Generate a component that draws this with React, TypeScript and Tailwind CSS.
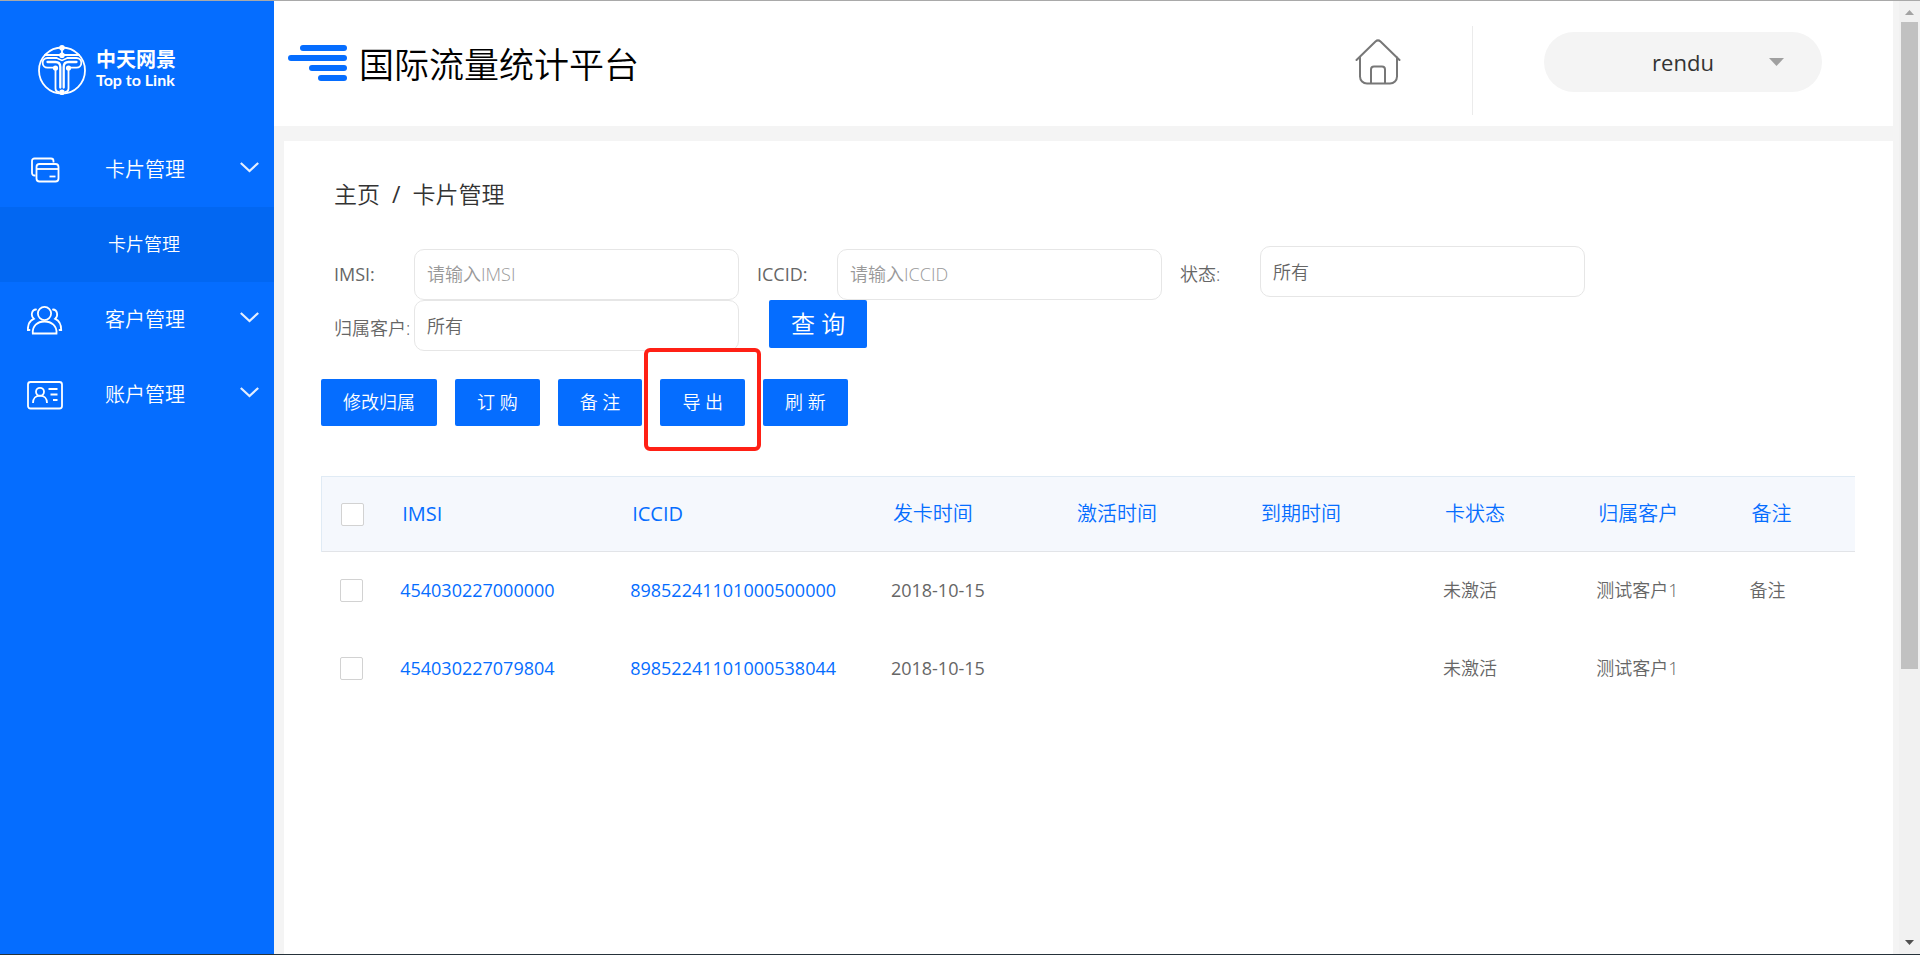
import { Fragment } from 'react';

const menus = [
  { label: '卡片管理', icon: CardIcon, children: ['卡片管理'] },
  { label: '客户管理', icon: UsersIcon, children: [] },
  { label: '账户管理', icon: IdIcon, children: [] },
];

const columns = [
  { title: 'IMSI', className: 'w-[15%] font-normal' },
  { title: 'ICCID', className: 'w-[17%] font-normal' },
  { title: '发卡时间', className: 'w-[12%] font-[350]' },
  { title: '激活时间', className: 'w-[12%] font-[350]' },
  { title: '到期时间', className: 'w-[12%] font-[350]' },
  { title: '卡状态', className: 'w-[10%] font-[350]' },
  { title: '归属客户', className: 'w-[10%] font-[350]' },
  { title: '备注', className: 'w-[7%] font-[350]' },
];

const rows = [
  {
    imsi: '454030227000000',
    iccid: '89852241101000500000',
    issued: '2018-10-15',
    activated: '',
    expires: '',
    status: '未激活',
    customer: '测试客户1',
    remark: '备注',
  },
  {
    imsi: '454030227079804',
    iccid: '89852241101000538044',
    issued: '2018-10-15',
    activated: '',
    expires: '',
    status: '未激活',
    customer: '测试客户1',
    remark: '',
  },
];

const fieldClass =
  'h-[51px] w-[325px] appearance-none rounded-[10px] border border-[#e6e6e6] bg-white px-3 text-lg font-[350] text-[#666] placeholder:text-[#999] outline-none';
const buttonClass = 'h-[47px] rounded-[2px] bg-[#056dff] px-[22px] pb-[2px] text-lg text-white';
const checkboxClass =
  'block h-[23px] w-[23px] appearance-none rounded-[2px] border border-[#d2d2d2] bg-white checked:bg-[#056dff]';

function Logo() {
  return (
    <svg width="48" height="50" viewBox="0 0 48 50" fill="none" stroke="#fff" strokeWidth="1.8" strokeLinecap="round" aria-hidden="true">
      <circle cx="24" cy="25.500" r="23" />
      <path d="M7 10H41" />
      <path d="M18.500 13H9.500a4.800 4.800 0 0 0 0 9.700H17.500V43.500q0 3 3 3.500" />
      <path d="M29.500 13H38.500a4.800 4.800 0 0 1 0 9.700H30.500V43.500q0 3-3 3.500" />
      <path d="M18.500 13l5.500 2.500 5.500-2.500" strokeWidth="1.400" />
      <path d="M9.500 17H17.500q4.800 0 4.800 5V42.500M38.500 17H30.500q-4.800 0-4.800 5V42.500" strokeWidth="2.300" />
      <path d="M24 3v8" />
      <g fill="#fff" stroke="none">
        <circle cx="24" cy="2.800" r="2.800" />
        <circle cx="24" cy="10.300" r="2.800" />
        <circle cx="17.500" cy="23" r="2.600" />
        <circle cx="30.500" cy="23" r="2.600" />
        <circle cx="24" cy="47.200" r="2.800" />
      </g>
    </svg>
  );
}

function CardIcon() {
  return (
    <svg width="36" height="36" viewBox="0 0 36 36" fill="none" stroke="#fff" strokeWidth="1.8" aria-hidden="true">
      <path d="M8.500 23.500H7.500a2.500 2.500 0 0 1-2.500-2.500V9A2.500 2.500 0 0 1 7.500 6.500h16.500a2.500 2.500 0 0 1 2.500 2.500v1.500" />
      <rect x="9.500" y="12" width="22" height="17.500" rx="3" />
      <path d="M10 17h21.500" />
      <path d="M22.500 24.500h6" />
    </svg>
  );
}

function UsersIcon() {
  return (
    <svg width="36" height="36" viewBox="0 0 36 36" fill="none" stroke="#fff" strokeWidth="1.8" strokeLinecap="round" aria-hidden="true">
      <circle cx="17.500" cy="11.500" r="6.600" />
      <path d="M5.800 31.500c-.6-7.500 4.500-12 11.700-12s12.600 4.500 12 12z" />
      <path d="M9 7.500c-4.500.2-5.500 6.500-2.200 9.300-4 1.700-6 6-6 11.200h1.700" />
      <path d="M26 7.500c4.500.2 5.500 6.500 2.200 9.300 4 1.700 6 6 6 11.200h-1.700" />
    </svg>
  );
}

function IdIcon() {
  return (
    <svg width="36" height="36" viewBox="0 0 36 36" fill="none" stroke="#fff" strokeWidth="1.8" aria-hidden="true">
      <rect x="1" y="5" width="34" height="26.500" rx="2.500" />
      <circle cx="13" cy="14.800" r="4" />
      <path d="M6 26c0-4.500 2.800-7.300 7-7.300s7 2.800 7 7.300" />
      <path d="M21.500 12h9M23.500 17.500h7M26 23h4.500" />
    </svg>
  );
}

function Chevron() {
  return (
    <svg width="19" height="11" viewBox="0 0 19 11" fill="none" stroke="#e4eeff" strokeWidth="2.200" aria-hidden="true">
      <path d="M.8 1l8.700 8 8.700-8" />
    </svg>
  );
}

function Sidebar() {
  return (
    <aside className="w-[274px] shrink-0 bg-[#056dff] text-white">
      <div className="flex h-[131px] items-center gap-[10px] pb-[10px] pl-[38px] pt-4">
        <Logo />
        <div>
          <div className="text-xl font-bold leading-5">中天网景</div>
          <div className="font-[family-name:Lato,sans-serif] text-base font-bold leading-5">Top to Link</div>
        </div>
      </div>
      <nav>
        {menus.map(({ label, icon: Icon, children }) => (
          <Fragment key={label}>
            <button type="button" className="flex h-[75px] w-full items-center pl-[27px] pr-[15px] text-xl">
              <Icon />
              <span className="ml-[42px] flex-1 text-left">{label}</span>
              <span className="pb-[5px]">
                <Chevron />
              </span>
            </button>
            {children.map((child) => (
              <a key={child} href="#" className="flex h-[75px] items-center bg-[#0267f2] pb-[2px] pl-[108px] text-lg">
                {child}
              </a>
            ))}
          </Fragment>
        ))}
      </nav>
    </aside>
  );
}

function Header() {
  return (
    <header className="flex h-[125px] items-center justify-between bg-white pb-[3px] pl-[14px] pr-[71px]">
      <div className="flex items-start gap-3 pt-[6px]">
        <svg width="59" height="36" viewBox="0 0 59 36" fill="#056dff" aria-hidden="true">
          <rect x="12" y="0" width="47" height="6" rx="3" />
          <rect x="0" y="10" width="59" height="6" rx="3" />
          <rect x="21" y="20" width="38" height="6" rx="3" />
          <rect x="30" y="30" width="29" height="6" rx="3" />
        </svg>
        <h1 className="text-[35px] leading-10 text-black">国际流量统计平台</h1>
      </div>
      <div className="flex h-full items-center">
        <a href="#" aria-label="主页">
          <svg width="46" height="46" viewBox="0 0 46 46" fill="none" stroke="#777" strokeWidth="2" strokeLinecap="round" strokeLinejoin="round" aria-hidden="true">
            <path d="M1.500 21L20.500 2.500q2.500-2.200 5 0L44.500 21" />
            <path d="M5 18.500V37.500a7 7 0 0 0 7 7H35a7 7 0 0 0 7-7V18.500" />
            <path d="M16 44V30.500a3 3 0 0 1 3-3h8a3 3 0 0 1 3 3V44" />
          </svg>
        </a>
        <div className="mx-[71px] mt-4 h-[89px] w-px bg-[#ebebeb]" />
        <button type="button" className="grid h-[60px] w-[278px] grid-cols-[1fr_auto_1fr] items-center rounded-[30px] bg-[#f4f4f4] px-[38px] text-[22px] font-normal text-[#333]">
          <span />
          <span>rendu</span>
          <svg className="justify-self-end" width="15" height="8" viewBox="0 0 15 8" fill="#a0a0a0" aria-hidden="true">
            <path d="M0 0h15L7.500 8z" />
          </svg>
        </button>
      </div>
    </header>
  );
}

function Filters() {
  return (
    <form className="mt-9 flex flex-wrap items-start gap-x-[18px] pl-[13px] text-[#666]">
      <div className="flex items-center pt-[3px]">
        <label htmlFor="imsi" className="w-20 pb-[2px] text-lg font-normal">IMSI:</label>
        <input id="imsi" className={`${fieldClass} pb-[2px]`} placeholder="请输入IMSI" />
      </div>
      <div className="flex items-center pt-[3px]">
        <label htmlFor="iccid" className="w-20 pb-[2px] text-lg font-normal">ICCID:</label>
        <input id="iccid" className={`${fieldClass} pb-[2px]`} placeholder="请输入ICCID" />
      </div>
      <div className="flex items-center">
        <label htmlFor="status" className="w-20 pt-1 text-lg">状态:</label>
        <select id="status" className={fieldClass}>
          <option>所有</option>
        </select>
      </div>
      <div className="flex items-center">
        <label htmlFor="customer" className="w-20 whitespace-nowrap pt-1 text-lg">归属客户:</label>
        <select id="customer" className={fieldClass}>
          <option>所有</option>
        </select>
      </div>
      <button type="button" className="ml-3 h-12 rounded-[2px] bg-[#056dff] px-[22px] text-2xl text-white">查 询</button>
    </form>
  );
}

function Toolbar() {
  return (
    <div className="mt-7 flex gap-[18px]">
      <button type="button" className={buttonClass}>修改归属</button>
      <button type="button" className={buttonClass}>订 购</button>
      <button type="button" className={buttonClass}>备 注</button>
      <div className="relative">
        <button type="button" className={buttonClass}>导 出</button>
        <div className="pointer-events-none absolute -bottom-[25px] -left-4 -right-4 -top-[31px] rounded-md border-4 border-[#ff2015]" />
      </div>
      <button type="button" className={buttonClass}>刷 新</button>
    </div>
  );
}

function CardTable() {
  return (
    <table className="mt-[50px] w-full table-fixed text-left text-lg text-[#666]">
      <thead>
        <tr className="h-[75px] border-b border-t border-b-[#e2e4e8] border-t-[#e0ebf5] bg-[#f5f8fd] text-xl text-[#056dff]">
          <th className="w-[5%] border-l border-[#e0ebf5] pl-[19px]">
            <input type="checkbox" aria-label="全选" className={checkboxClass} />
          </th>
          {columns.map((col) => (
            <th key={col.title} className={`${col.className} pl-1`}>{col.title}</th>
          ))}
        </tr>
      </thead>
      <tbody>
        {rows.map((row) => (
          <tr key={row.imsi} className="h-[78px] *:pb-[1px] *:pl-[2px]">
            <td>
              <input type="checkbox" aria-label={row.imsi} className={`${checkboxClass} ml-4`} />
            </td>
            <td><a href="#" className="font-normal text-[#056dff]">{row.imsi}</a></td>
            <td><a href="#" className="font-normal text-[#056dff]">{row.iccid}</a></td>
            <td className="font-normal">{row.issued}</td>
            <td>{row.activated}</td>
            <td>{row.expires}</td>
            <td>{row.status}</td>
            <td>{row.customer}</td>
            <td>{row.remark}</td>
          </tr>
        ))}
      </tbody>
    </table>
  );
}

function ScrollTrack() {
  return (
    <div className="flex w-[21px] shrink-0 flex-col items-center bg-[#f1f1f1] py-[9px]">
      <svg width="9" height="5" viewBox="0 0 9 5" fill="#a3a3a3" aria-hidden="true">
        <path d="M4.500 0L9 5H0z" />
      </svg>
      <div className="my-[7px] w-full flex-1 px-[2px]">
        <div className="h-[71%] bg-[#c1c1c1]" />
      </div>
      <svg width="9" height="5" viewBox="0 0 9 5" fill="#505050" aria-hidden="true">
        <path d="M0 0h9L4.500 5z" />
      </svg>
    </div>
  );
}

export default function App() {
  return (
    <div className="flex min-h-screen border-b border-t border-b-[#26323a] border-t-[#a9a9a9] bg-[#f4f4f4] font-['Open_Sans','Noto_Sans_CJK_SC',sans-serif] font-[350]">
      <Sidebar />
      <div className="mr-[6px] flex min-w-0 flex-1 flex-col">
        <Header />
        <main className="ml-[10px] mt-[15px] flex-1 bg-white pb-8 pl-[37px] pr-[38px] pt-[37px]">
          <div className="flex gap-3 pl-[13px] text-[23px] leading-8 text-[#333]">
            <a href="#">主页</a>
            <span className="font-normal">/</span>
            <span>卡片管理</span>
          </div>
          <Filters />
          <Toolbar />
          <CardTable />
        </main>
      </div>
      <ScrollTrack />
    </div>
  );
}
